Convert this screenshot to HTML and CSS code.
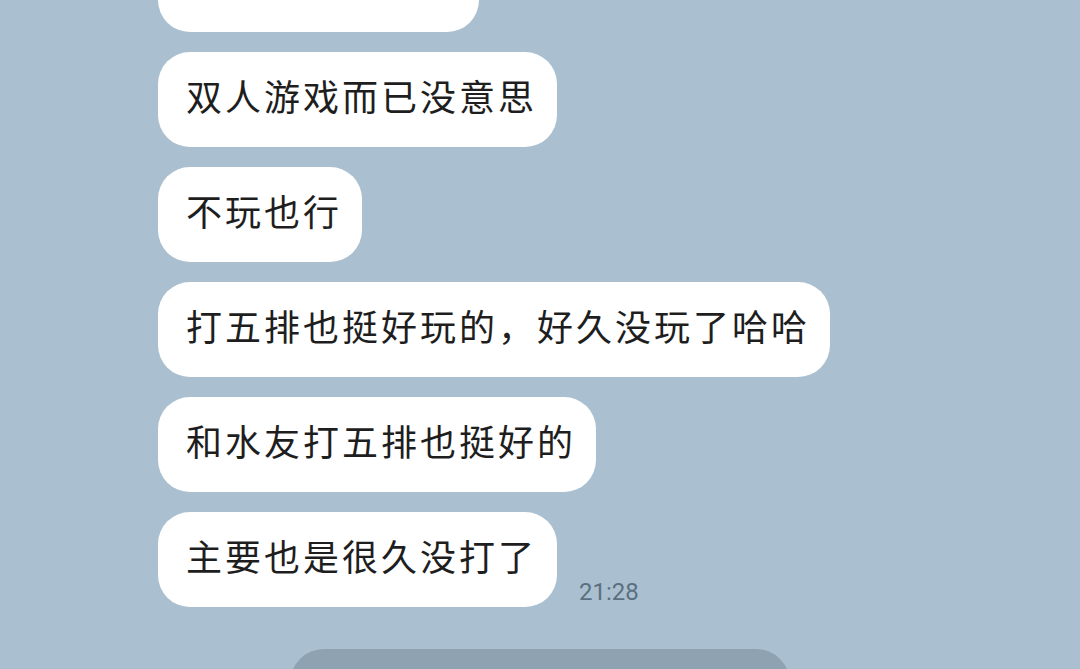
FILE: index.html
```html
<!DOCTYPE html>
<html lang="zh">
<head>
<meta charset="utf-8">
<link rel="stylesheet" href="styles.css">
</head>
<body>
<div class="chat">
  <div class="row"><div class="bubble">那玩点别的也行</div></div>
  <div class="row"><div class="bubble">双人游戏而已没意思</div></div>
  <div class="row"><div class="bubble">不玩也行</div></div>
  <div class="row"><div class="bubble">打五排也挺好玩的，好久没玩了哈哈</div></div>
  <div class="row"><div class="bubble">和水友打五排也挺好的</div></div>
  <div class="row"><div class="bubble">主要也是很久没打了</div><span class="time">21:28</span></div>
  <div class="pill-wrap"><div class="pill"></div></div>
</div>
</body>
</html>
```
FILE: styles.css
```css
html, body {
  margin: 0;
  padding: 0;
  width: 1080px;
  height: 669px;
  overflow: hidden;
  background: #aac0d0;
}
.chat {
  display: flex;
  flex-direction: column;
  gap: 20px;
  margin-top: -63px;
  padding-left: 158px;
}
.row {
  display: flex;
  align-items: flex-end;
  gap: 22px;
}
.bubble {
  background: #ffffff;
  border-radius: 32px;
  padding: 20px 20px 28px 28px;
  line-height: 47px;
  font-family: "Noto Sans CJK SC", "Noto Sans", sans-serif;
  font-size: 36px;
  letter-spacing: 3px;
  color: #1e1e1e;
  white-space: nowrap;
}
.time {
  font-family: Roboto, "Noto Sans", sans-serif;
  font-size: 24px;
  color: #5b6f7f;
  line-height: 1;
  padding-bottom: 3px;
}
.pill-wrap {
  display: flex;
  justify-content: center;
  margin-left: -158px;
  margin-top: 22px;
}
.pill {
  width: 500px;
  height: 40px;
  background: #8fa2b2;
  border-radius: 34px 34px 0 0;
}
```
